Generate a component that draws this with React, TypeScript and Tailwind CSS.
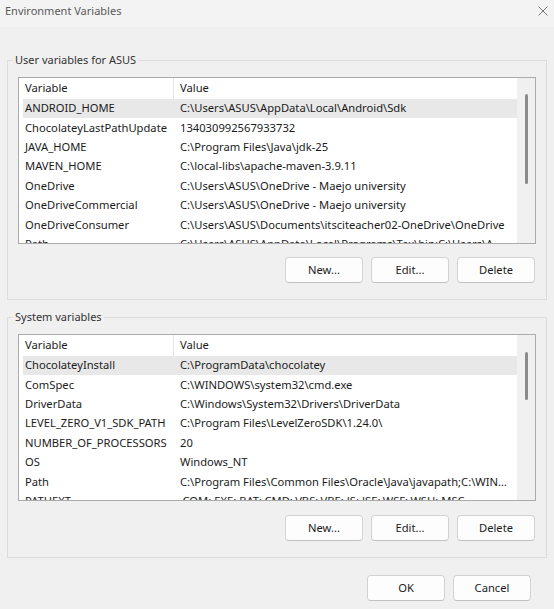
import React from "react";

type Row = { name: string; value: string };

const userRows: Row[] = [
  { name: "ANDROID_HOME", value: "C:\\Users\\ASUS\\AppData\\Local\\Android\\Sdk" },
  { name: "ChocolateyLastPathUpdate", value: "134030992567933732" },
  { name: "JAVA_HOME", value: "C:\\Program Files\\Java\\jdk-25" },
  { name: "MAVEN_HOME", value: "C:\\local-libs\\apache-maven-3.9.11" },
  { name: "OneDrive", value: "C:\\Users\\ASUS\\OneDrive - Maejo university" },
  { name: "OneDriveCommercial", value: "C:\\Users\\ASUS\\OneDrive - Maejo university" },
  { name: "OneDriveConsumer", value: "C:\\Users\\ASUS\\Documents\\itsciteacher02-OneDrive\\OneDrive" },
  { name: "Path", value: "C:\\Users\\ASUS\\AppData\\Local\\Programs\\Tex\\bin;C:\\Users\\A…" },
];

const sysRows: Row[] = [
  { name: "ChocolateyInstall", value: "C:\\ProgramData\\chocolatey" },
  { name: "ComSpec", value: "C:\\WINDOWS\\system32\\cmd.exe" },
  { name: "DriverData", value: "C:\\Windows\\System32\\Drivers\\DriverData" },
  { name: "LEVEL_ZERO_V1_SDK_PATH", value: "C:\\Program Files\\LevelZeroSDK\\1.24.0\\" },
  { name: "NUMBER_OF_PROCESSORS", value: "20" },
  { name: "OS", value: "Windows_NT" },
  { name: "Path", value: "C:\\Program Files\\Common Files\\Oracle\\Java\\javapath;C:\\WIN…" },
  { name: "PATHEXT", value: ".COM;.EXE;.BAT;.CMD;.VBS;.VBE;.JS;.JSE;.WSF;.WSH;.MSC" },
];

function Btn({ children }: { children: React.ReactNode }) {
  return (
    <button className="w-[78px] h-[26px] rounded-[4px] border border-[#d3d3d3] border-b-[#c2c2c2] bg-[#fdfdfd] text-[#1b1b1b] text-[11.2px] leading-none flex items-center justify-center">
      {children}
    </button>
  );
}

function VarList({ rows, thumbTop, thumbH }: { rows: Row[]; thumbTop: string; thumbH: string }) {
  return (
    <div className="h-[167px] border border-[#ababab] bg-white flex text-[11.2px]">
      <div className="flex-1 min-w-0 overflow-hidden">
        <div className="h-[21px] flex items-center text-[#1b1b1b]">
          <div className="w-[155px] h-full pl-[6px] border-r border-[#e6e6e6] flex items-center">Variable</div>
          <div className="pl-[6px]">Value</div>
        </div>
        {rows.map((r, i) => (
          <div
            key={r.name + i}
            className={
              "ml-[4px] h-[19.4px] flex items-center whitespace-nowrap text-[#1b1b1b] " +
              (i === 0 ? "bg-[#e8e8e8]" : "")
            }
          >
            <div className="w-[157px] pl-[2px] shrink-0">{r.name}</div>
            <div>{r.value}</div>
          </div>
        ))}
      </div>
      <div className={"w-[18px] shrink-0 bg-[#f0f0f0] flex justify-center " + thumbTop}>
        <div className={"w-[3px] rounded-full bg-[#8b8b8b] " + thumbH} />
      </div>
    </div>
  );
}

export default function App() {
  return (
    <div className="w-[554px] h-[609px] bg-[#f0f0f0] font-['Noto_Sans',sans-serif] text-[11px] flex flex-col overflow-hidden">
      <div className="h-[27px] shrink-0 bg-[#f3f3f3] flex items-start justify-between pl-[5px] pr-[6px] pt-[3px]">
        <span className="leading-[16px] text-[#5a5a5a]">Environment Variables</span>
        <svg width="10" height="10" viewBox="0 0 10 10" className="mt-[3px]">
          <path d="M0.5 0.5 L9.5 9.5 M9.5 0.5 L0.5 9.5" stroke="#6a6a6a" strokeWidth="0.9" />
        </svg>
      </div>

      <fieldset className="mt-[25px] mx-[7px] border border-[#dcdcdc] px-[10px] pt-[9px] pb-[16px] min-w-0">
        <legend className="-ml-[5px] px-[2px] leading-[16px] text-[#333333]">User variables for ASUS</legend>
        <VarList rows={userRows} thumbTop="pt-[16px]" thumbH="h-[90px]" />
        <div className="mt-[13px] flex justify-end gap-[8px] pr-[1px]">
          <Btn>New...</Btn>
          <Btn>Edit...</Btn>
          <Btn>Delete</Btn>
        </div>
      </fieldset>

      <fieldset className="mt-[9px] mx-[7px] border border-[#dcdcdc] px-[10px] pt-[9px] pb-[16px] min-w-0">
        <legend className="-ml-[5px] px-[2px] leading-[16px] text-[#333333]">System variables</legend>
        <VarList rows={sysRows} thumbTop="pt-[17px]" thumbH="h-[48px]" />
        <div className="mt-[14px] flex justify-end gap-[8px] pr-[1px]">
          <Btn>New...</Btn>
          <Btn>Edit...</Btn>
          <Btn>Delete</Btn>
        </div>
      </fieldset>

      <div className="mt-[17px] flex justify-end gap-[8px] pr-[23px]">
        <Btn>OK</Btn>
        <Btn>Cancel</Btn>
      </div>
    </div>
  );
}
